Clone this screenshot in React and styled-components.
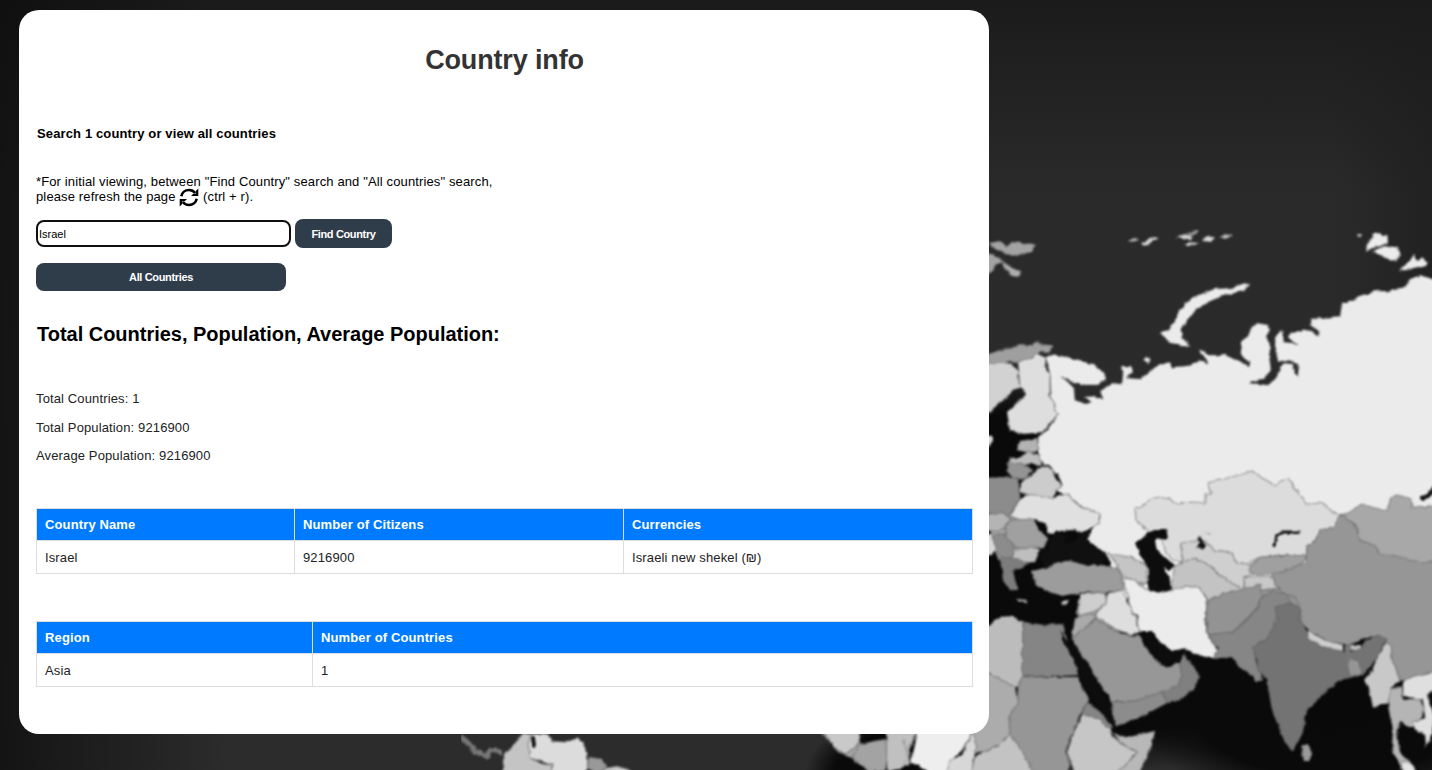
import React, { useState } from "react";
import styled, { createGlobalStyle } from "styled-components";

const GlobalStyle = createGlobalStyle`
  * { box-sizing: border-box; }
  html, body { margin: 0; height: 100%; overflow: hidden; background: #222; }
  body {
    font-family: "Liberation Sans", Arial, sans-serif;
    font-size: 13px;
    letter-spacing: 0.13px;
    color: #000;
  }
`;

const Page = styled.div`
  position: relative;
  height: 770px;
  padding: 10px 0 0 19px;
  overflow: hidden;
`;

const Backdrop = styled.svg`
  position: absolute;
  inset: 0;
  z-index: 0;
  display: block;
`;

const Card = styled.main`
  position: relative;
  z-index: 1;
  display: flex;
  flex-direction: column;
  width: 970px;
  height: 724px;
  padding: 34px 16px 0 17px;
  background: #fff;
  border-radius: 20px;
`;

const Title = styled.h1`
  margin: 0;
  font-size: 27px;
  line-height: 32px;
  letter-spacing: -0.15px;
  text-align: center;
  color: #333;
`;

const Lead = styled.h4`
  margin: 50px 0 0 1px;
  font-size: 13px;
  line-height: 15px;
`;

const Note = styled.p`
  margin: 33px 0 0;
  line-height: 15px;
`;

const RefreshGlyph = styled.svg`
  width: 20px;
  height: 19px;
  margin: -6px 0 -4px;
  vertical-align: -2px;
`;

const SearchRow = styled.form`
  display: flex;
  align-items: center;
  gap: 4px;
  margin-top: 15px;
`;

const SearchInput = styled.input`
  width: 255px;
  height: 27px;
  padding: 0 1px;
  border: 2px solid #101010;
  border-radius: 8px;
  outline: none;
  font: 11px "Liberation Sans", Arial, sans-serif;
  color: #000;
`;

const Button = styled.button`
  width: ${(p) => p.$width}px;
  height: ${(p) => p.$height}px;
  padding: 0;
  border: 0;
  border-radius: 8px;
  background: #2f3c4a;
  color: #fff;
  font: bold 11px "Liberation Sans", Arial, sans-serif;
  letter-spacing: -0.35px;
`;

const AllRow = styled.div`
  display: flex;
  margin-top: 15px;
`;

const SectionTitle = styled.h2`
  margin: 32px 0 0 1px;
  font-size: 20px;
  line-height: 22px;
  letter-spacing: -0.02px;
`;

const Stats = styled.div`
  display: flex;
  flex-direction: column;
  gap: 13.5px;
  margin-top: 46px;
  color: #222;
  line-height: 15px;
`;

const Table = styled.table`
  width: 937px;
  margin-top: ${(p) => p.$top}px;
  border-collapse: collapse;
  table-layout: fixed;
`;

const Th = styled.th`
  width: ${(p) => p.$width || "auto"};
  height: 32px;
  padding: 0 8px;
  border: 1px solid #ddd;
  background: #007bff;
  color: #fff;
  text-align: left;
  line-height: 15px;
`;

const Td = styled.td`
  height: 33px;
  padding: 1px 8px 0;
  border: 1px solid #ddd;
  color: #222;
  line-height: 15px;
`;

const lands = [
  // Filler beneath adjoining countries
  ["#929292", "1185,560 1300,552 1304,636 1262,660 1212,645"],
  ["#a5a5a5", "1078,600 1120,594 1135,632 1090,630 1076,634"],
  ["#a5a5a5", "990,500 1030,500 1035,555 1000,562 990,540"],
  // Svalbard and Arctic islands
  ["#a3a3a3", "989,243 1000,241 1005,246 1012,242 1025,243 1036,246 1030,252 1018,256 1005,254 995,249"],
  ["#a3a3a3", "985,252 1000,258 1004,262 996,264 992,272 985,277"],
  ["#adadad", "1003,261 1012,268 1021,271 1018,277 1010,274 1004,267"],
  ["#c4c4c4", "1128,241 1134,238 1138,240 1132,242"],
  ["#dcdcdc", "1140,244 1147,240 1154,237 1159,238 1152,242 1145,246"],
  ["#d0d0d0", "1176,238 1184,234 1192,235 1192,239 1184,239"],
  ["#9e9e9e", "1188,233 1196,229 1199,231 1192,236"],
  ["#d6d6d6", "1184,246 1189,242 1199,243 1193,246"],
  ["#dcdcdc", "1202,241 1209,235 1215,238 1211,242"],
  ["#bdbdbd", "1219,238 1226,234 1232,236 1226,239"],
  ["#ebebeb", "1160,333 1168,331 1172,325 1178,313 1186,303 1192,297 1204,293 1214,289 1230,288 1245,283 1250,285 1244,291 1226,295 1213,300 1202,306 1190,317 1181,330 1182,337 1190,346 1180,345 1170,343 1165,338"],
  ["#ebebeb", "1366,251 1367,243 1373,238 1372,234 1380,233 1387,236 1388,243 1380,246 1373,248"],
  ["#ebebeb", "1373,251 1383,246 1398,248 1401,254 1397,261 1385,258"],
  ["#ebebeb", "1399,271 1407,263 1414,255 1418,261 1422,257 1428,262 1426,266 1415,269"],
  ["#bbbbbb", "1357,234 1362,234 1361,237 1358,237"],
  ["#ebebeb", "1143,361 1148,357 1152,360 1148,364"],
  // Russia
  ["#ebebeb", "1046,358 1052,354 1062,356 1075,359 1093,364 1104,372 1106,379 1098,385 1085,385 1070,381 1061,376 1068,382 1074,388 1075,400 1086,404 1091,402 1085,397 1095,396 1103,399 1100,391 1112,383 1122,384 1123,372 1121,366 1132,366 1133,371 1127,378 1140,379 1150,371 1160,365 1170,362 1172,367 1185,366 1200,361 1208,364 1203,355 1198,350 1205,350 1209,355 1225,355 1240,361 1249,367 1250,362 1241,355 1240,342 1248,336 1251,328 1256,323 1268,325 1270,330 1266,337 1270,344 1270,362 1271,370 1264,379 1252,381 1250,383 1268,385 1278,376 1280,367 1284,363 1293,364 1295,374 1299,375 1297,364 1288,360 1278,362 1275,348 1275,336 1282,330 1284,342 1298,344 1289,338 1290,333 1308,330 1319,336 1319,332 1310,325 1310,319 1340,316 1342,303 1355,299 1375,291 1390,291 1405,287 1410,279 1420,275 1427,277 1440,283 1440,570 1120,600 1110,563 1106,554 1096,547 1087,541 1090,530 1101,518 1085,508 1070,500 1057,490 1062,484 1058,475 1050,467 1040,462 1038,448 1038,437 1047,430 1058,414 1051,400 1050,375"],
  // Scandinavia
  ["#9f9f9f", "980,356 989,354 1000,350 1012,348 1020,344 1028,346 1038,341 1042,344 1053,347 1048,353 1040,352 1034,357 1026,364 1010,362 1000,365 980,366"],
  ["#d2d2d2", "980,366 1000,362 1012,364 1018,372 1020,388 1012,390 1007,398 998,404 990,413 980,414"],
  ["#dedede", "1018,362 1028,360 1036,353 1046,358 1045,368 1050,375 1050,396 1058,414 1043,432 1024,434 1010,431 1007,412 1018,403 1025,394 1020,388"],
  ["#dddddd", "980,434 991,435 993,441 989,446 980,446"],
  // Baltics and Eastern Europe
  ["#b3b3b3", "1020,441 1037,438 1039,450 1028,453 1017,450"],
  ["#bdbdbd", "1010,458 1021,457 1027,451 1040,455 1041,465 1030,464 1018,465 1008,464"],
  ["#949494", "1007,463 1021,463 1033,469 1026,479 1013,479 1007,472"],
  ["#8c8c8c", "980,478 1008,477 1019,479 1019,500 1009,515 989,513 980,510"],
  ["#cccccc", "1019,492 1022,482 1034,473 1042,465 1053,470 1056,480 1062,484 1055,493 1053,498 1040,498"],
  ["#e0e0e0", "1010,517 1018,501 1026,495 1053,498 1069,493 1073,502 1085,508 1100,514 1099,522 1090,529 1083,533 1075,529 1065,530 1057,532 1048,534 1045,524 1035,519 1025,521"],
  ["#b4b4b4", "980,515 1001,513 1011,518 1004,529 980,533"],
  ["#a0a0a0", "1005,529 1011,520 1033,519 1041,531 1047,539 1042,548 1032,549 1018,548 1006,540"],
  ["#8c8c8c", "993,534 1005,534 1014,546 1013,558 1003,558 994,550"],
  ["#bebebe", "1013,549 1036,548 1040,550 1035,562 1022,563 1012,561"],
  ["#d8d8d8", "980,535 993,535 995,550 991,556 980,553"],
  ["#7d7d7d", "1000,558 1013,558 1029,563 1020,568 1013,571 1015,580 1018,590 1009,590 1003,579"],
  ["#b2b2b2", "1017,599 1027,600 1026,603 1019,602"],
  ["#cccccc", "1061,602 1069,601 1067,605 1062,605"],
  // Turkey and the Caucasus
  ["#9c9c9c", "1032,571 1045,568 1058,562 1070,561 1085,565 1103,565 1118,568 1122,578 1124,590 1105,593 1085,592 1075,594 1060,595 1045,591 1036,585"],
  ["#c5c5c5", "1108,553 1130,557 1146,565 1148,578 1144,585 1133,580 1122,576 1118,566"],
  // Central Asia
  ["#dcdcdc", "1136,520 1135,508 1145,505 1147,501 1158,497 1170,499 1178,504 1190,502 1206,503 1205,494 1212,493 1208,483 1232,477 1252,471 1262,478 1275,485 1288,479 1297,490 1306,504 1321,503 1334,512 1341,516 1333,528 1320,530 1315,541 1307,546 1307,556 1290,555 1262,557 1250,563 1236,562 1230,552 1213,550 1200,540 1182,545 1182,562 1172,560 1165,550 1160,535 1145,530"],
  ["#cfcfcf", "1182,543 1196,541 1204,540 1213,550 1230,552 1236,562 1250,565 1262,572 1244,577 1245,592 1235,588 1216,572 1205,563 1196,558 1182,562"],
  ["#c3c3c3", "1174,567 1182,562 1196,558 1210,566 1220,575 1240,588 1240,592 1222,600 1208,601 1200,588 1185,586 1172,592"],
  ["#a0a0a0", "1250,566 1262,557 1290,555 1307,556 1300,566 1282,572 1262,575 1250,573"],
  ["#c8c8c8", "1244,577 1270,576 1280,588 1262,590 1245,592"],
  // China and Mongolia
  ["#969696", "1341,514 1355,524 1360,540 1375,546 1440,560 1440,675 1425,674 1410,682 1400,680 1392,662 1390,650 1385,640 1370,636 1350,645 1330,642 1310,632 1302,622 1299,606 1295,598 1285,594 1278,588 1272,575 1282,572 1306,562 1307,546 1315,541 1320,530 1333,528"],
  ["#a8a8a8", "1341,515 1350,512 1362,504 1375,508 1388,510 1391,497 1397,495 1410,498 1412,507 1440,506 1440,558 1425,563 1400,557 1380,553 1375,546 1360,540 1356,525"],
  // South Asia
  ["#939393", "1208,601 1222,594 1240,590 1260,584 1262,598 1256,610 1245,620 1233,632 1208,635 1206,615"],
  ["#868686", "1208,635 1233,632 1245,622 1258,608 1262,597 1272,591 1285,594 1292,603 1278,607 1275,625 1265,640 1253,647 1256,662 1263,680 1256,682 1248,672 1240,668 1232,657 1212,659 1218,648"],
  ["#737373", "1253,647 1265,640 1278,622 1275,607 1290,603 1300,608 1300,620 1307,632 1325,642 1345,652 1360,650 1366,640 1378,635 1387,639 1378,656 1368,670 1362,675 1340,680 1325,693 1307,710 1302,735 1292,751 1285,742 1272,710 1267,680 1258,670 1257,660"],
  ["#cdcdcd", "1308,631 1325,640 1343,645 1343,651 1325,648 1308,638"],
  ["#bfbfbf", "1350,645 1361,645 1361,650 1350,650"],
  ["#959595", "1347,658 1359,661 1361,676 1349,676"],
  ["#9a9a9a", "1303,744 1309,746 1312,754 1309,761 1304,761 1302,752"],
  // South-East Asia
  ["#c8c8c8", "1386,643 1391,645 1392,660 1400,680 1390,690 1390,703 1380,705 1373,708 1370,693 1364,680 1372,670 1378,656"],
  ["#b5b5b5", "1390,690 1402,686 1403,700 1420,698 1425,710 1415,727 1405,725 1400,722 1397,735 1400,752 1410,762 1413,775 1402,770 1392,748 1393,730 1388,705"],
  ["#dfdfdf", "1403,682 1415,676 1440,670 1440,685 1427,695 1433,710 1434,730 1426,747 1425,735 1415,730 1413,722 1425,718 1423,700 1403,696"],
  ["#e4e4e4", "1402,761 1412,764 1418,775 1404,775"],
  // Middle East
  ["#ececec", "1122,578 1135,580 1145,588 1160,593 1172,590 1185,586 1200,588 1207,600 1205,625 1210,640 1218,650 1213,659 1195,654 1182,649 1172,652 1160,643 1150,633 1140,632 1137,617 1130,608 1128,595"],
  ["#cecece", "1080,594 1105,592 1107,604 1095,611 1079,616"],
  ["#dedede", "1107,594 1122,590 1130,606 1137,620 1140,633 1128,635 1110,626 1095,615 1106,604"],
  ["#aaaaaa", "1075,618 1085,614 1097,615 1089,625 1079,636 1072,638"],
  ["#979797", "1072,638 1085,628 1095,619 1110,628 1125,635 1140,636 1145,648 1155,657 1160,665 1172,667 1182,656 1190,665 1193,675 1190,688 1172,695 1150,698 1135,701 1113,702 1104,690 1095,675 1080,652"],
  ["#8c8c8c", "1113,702 1135,701 1162,692 1167,703 1150,712 1130,721 1117,726 1112,714"],
  ["#808080", "1182,653 1190,662 1200,676 1194,689 1180,700 1167,703 1162,692 1178,686 1182,674 1179,663"],
  // Africa
  ["#bcbcbc", "980,623 989,626 1000,617 1012,616 1023,622 1023,677 1019,688 1012,686 989,673 980,670"],
  ["#858585", "1023,622 1045,625 1063,624 1067,640 1073,655 1078,675 1022,677"],
  ["#acacac", "980,670 989,673 1015,687 1018,704 1009,717 1012,733 1000,745 985,752 970,752"],
  ["#969696", "1022,677 1078,677 1089,700 1080,715 1072,735 1066,750 1070,765 1066,775 1035,775 1018,750 1010,735 1009,717 1017,704 1018,688"],
  ["#c6c6c6", "1083,714 1105,716 1112,735 1120,743 1138,752 1125,765 1115,775 1075,775 1067,752 1073,735 1078,723"],
  ["#b8b8b8", "1113,733 1125,738 1155,731 1152,745 1138,775 1112,775 1125,765 1138,752 1120,743"],
  ["#858585", "1087,702 1100,712 1113,728 1106,727 1100,718 1081,715"],
  ["#c3c3c3", "975,756 1000,745 1010,734 1020,748 1035,775 970,775"],
  ["#a5a5a5", "815,728 860,728 860,765 848,756 838,752 830,742"],
  ["#c9c9c9", "823,730 862,730 858,744 846,754 834,748"],
  ["#a3a3a3", "860,744 886,739 888,757 885,771 870,772 852,757"],
  ["#c0c0c0", "886,730 918,730 910,748 910,765 887,772"],
  ["#eeeeee", "918,730 973,730 965,747 950,762 946,780 930,774 918,765 911,763"],
  ["#d7d7d7", "973,730 976,748 970,780 946,780 948,761 962,755"],
  // South America
  ["#c4c4c4", "503,764 503,756 515,744 522,734 532,734 529,744 530,758 543,764 552,765 551,780 500,780"],
  ["#dcdcdc", "531,734 548,734 551,741 565,742 578,738 585,747 588,762 585,780 551,780 552,765 530,758 528,744"],
  ["#999999", "589,757 602,759 607,766 602,776 587,768"],
  ["#c8c8c8", "606,768 618,766 630,770 636,780 595,780"],
];

const waters = [
  ["#101010", "1041,555 1048,545 1052,535 1057,530 1061,535 1068,535 1065,543 1075,541 1078,535 1093,527 1092,533 1087,540 1095,546 1105,553 1108,560 1100,565 1085,564 1070,560 1058,562 1045,566 1039,560"],
  ["#0d0d0d", "1135,543 1145,535 1155,530 1166,530 1168,538 1155,540 1157,550 1165,558 1175,565 1170,570 1165,568 1170,580 1171,590 1160,593 1150,590 1146,583 1150,575 1146,565 1140,555"],
  ["#101010", "1195,538 1200,536 1204,541 1206,546 1202,549 1197,548 1200,542"],
  ["#0d0d0d", "1141,631 1152,631 1160,642 1172,651 1186,648 1180,662 1165,665 1158,658 1150,648"],
  ["#0d0d0d", "1061,630 1066,640 1076,648 1090,670 1098,686 1108,702 1116,726 1108,722 1097,706 1086,690 1080,672 1068,650 1062,640"],
];

const lines = [
  ["#111", 3, "1274,545 1276,536 1284,532 1299,532"],
  ["#151515", 4, "1422,498 1428,496 1434,488"],
  ["#888", 1, "1204,532 1210,533"],
  ["#777", 5, "461,737 467,742 475,751 487,757 491,750 500,752"],
  ["#111", 4, "533,738 534,746"],
  ["#888", 1, "904,740 907,752 904,765"],
  ["#888", 1, "913,736 909,750 910,765"],
  ["#777", 5, "1348,646 1348,660"],
];

function WorldMap() {
  return (
    <Backdrop width="1432" height="770" viewBox="0 0 1432 770" aria-hidden="true">
      <defs>
        <linearGradient id="edge" x1="0" x2="1">
          <stop offset="0" stopColor="#0c0c0c" stopOpacity="0.75" />
          <stop offset="0.16" stopColor="#0c0c0c" stopOpacity="0" />
          <stop offset="0.93" stopColor="#1c1c1c" stopOpacity="0" />
          <stop offset="1" stopColor="#1c1c1c" stopOpacity="0.6" />
        </linearGradient>
        <linearGradient id="sky" x1="0" x2="0" y1="0" y2="1">
          <stop offset="0" stopColor="#1b1b1b" />
          <stop offset="0.25" stopColor="#2a2a2a" />
          <stop offset="1" stopColor="#2c2c2c" />
        </linearGradient>
        <radialGradient id="deep">
          <stop offset="0" stopColor="#090909" />
          <stop offset="0.7" stopColor="#0a0a0a" />
          <stop offset="1" stopColor="#0a0a0a" stopOpacity="0" />
        </radialGradient>
        <filter id="coast" x="0" y="0" width="1" height="1" colorInterpolationFilters="sRGB">
          <feTurbulence type="fractalNoise" baseFrequency="0.14" numOctaves="2" seed="4" result="noise" />
          <feDisplacementMap in="SourceGraphic" in2="noise" scale="4" xChannelSelector="R" yChannelSelector="G" />
          <feGaussianBlur stdDeviation="0.8" />
        </filter>
      </defs>
      <rect width="1432" height="770" fill="url(#sky)" />
      <rect width="1432" height="770" fill="url(#edge)" />
      <ellipse cx="1010" cy="520" rx="110" ry="150" fill="url(#deep)" />
      <ellipse cx="1140" cy="640" rx="190" ry="130" fill="url(#deep)" />
      <ellipse cx="1330" cy="700" rx="200" ry="110" fill="url(#deep)" />
      <ellipse cx="900" cy="775" rx="95" ry="60" fill="url(#deep)" />
      <g filter="url(#coast)" strokeLinejoin="round" strokeLinecap="round">
        {lands.map(([fill, points], i) => (
          <polygon key={i} points={points} fill={fill} stroke="#5c5c5c" strokeOpacity="0.6" strokeWidth="1.2" />
        ))}
        {waters.map(([fill, points], i) => (
          <polygon key={i} points={points} fill={fill} />
        ))}
        {lines.map(([stroke, width, points], i) => (
          <polyline key={i} points={points} fill="none" stroke={stroke} strokeWidth={width} />
        ))}
      </g>
    </Backdrop>
  );
}

function RefreshIcon() {
  return (
    <RefreshGlyph viewBox="0 0 20 19" aria-hidden="true">
      <g fill="none" stroke="#000" strokeWidth="2.6">
        <path d="M2.3 8.2C3 4.4 6.2 2 10 2c2.600 0 4.700 1.100 6.200 3" />
        <path d="M17.700 10.800C17 14.600 13.800 17 10 17c-2.600 0-4.700-1.100-6.200-3" />
      </g>
      <path d="M19.300 0.600V8H12l2.300-2.300h2.500V3zM0.700 18.400V11H8l-2.300 2.300H3.200V16z" fill="#000" />
    </RefreshGlyph>
  );
}

function DataTable({ top, columns, rows }) {
  return (
    <Table $top={top}>
      <thead>
        <tr>
          {columns.map(([label, width]) => (
            <Th key={label} $width={width}>{label}</Th>
          ))}
        </tr>
      </thead>
      <tbody>
        {rows.map((row) => (
          <tr key={row[0]}>
            {row.map((cell) => <Td key={cell}>{cell}</Td>)}
          </tr>
        ))}
      </tbody>
    </Table>
  );
}

export default function App() {
  const [query, setQuery] = useState("Israel");
  return (
    <Page>
      <GlobalStyle />
      <WorldMap />
      <Card>
        <Title>Country info</Title>
        <Lead>Search 1 country or view all countries</Lead>
        <Note>
          *For initial viewing, between "Find Country" search and "All countries" search,
          <br />
          please refresh the page <RefreshIcon /> (ctrl + r).
        </Note>
        <SearchRow onSubmit={(e) => e.preventDefault()}>
          <SearchInput value={query} onChange={(e) => setQuery(e.target.value)} />
          <Button $width={97} $height={29}>Find Country</Button>
        </SearchRow>
        <AllRow>
          <Button $width={250} $height={28}>All Countries</Button>
        </AllRow>
        <SectionTitle>Total Countries, Population, Average Population:</SectionTitle>
        <Stats>
          <span>Total Countries: 1</span>
          <span>Total Population: 9216900</span>
          <span>Average Population: 9216900</span>
        </Stats>
        <DataTable
          top={45}
          columns={[["Country Name", "258px"], ["Number of Citizens", "329px"], ["Currencies"]]}
          rows={[["Israel", "9216900", "Israeli new shekel (₪)"]]}
        />
        <DataTable
          top={47}
          columns={[["Region", "276px"], ["Number of Countries"]]}
          rows={[["Asia", "1"]]}
        />
      </Card>
    </Page>
  );
}
